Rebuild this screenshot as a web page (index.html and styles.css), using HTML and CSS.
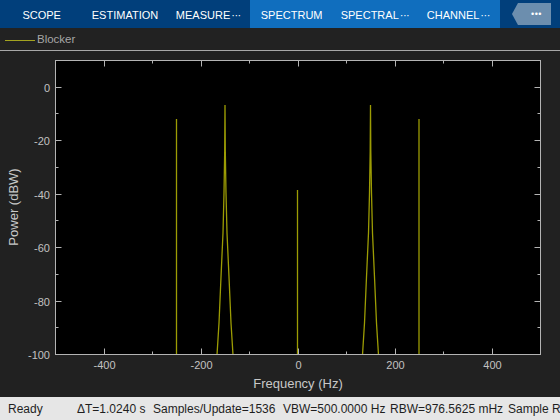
FILE: index.html
```html
<!DOCTYPE html>
<html>
<head>
<meta charset="utf-8">
<link rel="stylesheet" href="styles.css">
</head>
<body>
<div class="app">
  <div class="toolbar">
    <div class="tab-group dark">
      <div class="tab">SCOPE</div>
      <div class="tab">ESTIMATION</div>
      <div class="tab">MEASURE<span class="ell">···</span></div>
    </div>
    <div class="tab-group light">
      <div class="tab">SPECTRUM</div>
      <div class="tab">SPECTRAL<span class="ell">···</span></div>
      <div class="tab">CHANNEL <span class="ell">···</span></div>
    </div>
    <div class="more">
      <div class="more-btn">•••</div>
    </div>
  </div>
  <div class="legend">
    <span class="swatch"></span><span class="legend-label">Blocker</span>
  </div>
  <div class="plot">
    <svg class="chart" width="560" height="346" viewBox="0 0 560 346">
      <defs>
        <clipPath id="axclip"><rect x="55.5" y="9.5" width="485" height="294"/></clipPath>
      </defs>
      <rect x="55.5" y="9.5" width="485" height="294" fill="#000"/>
      <g clip-path="url(#axclip)" fill="none" stroke="#9c9c04" stroke-width="1.3">
        <path d="M176.5,68 V304"/>
        <path d="M419,68 V304"/>
        <path d="M297.5,139 V304"/>
        <path d="M217,304 L219,272 L221,226 L223,182 L224,142 L224.7,100 L225,54 L225.3,100 L226,142 L227,182 L229,226 L231,272 L233,304"/>
        <path d="M362.5,304 L364.5,272 L366.5,226 L368.5,182 L369.5,142 L370.2,100 L370.5,54 L370.8,100 L371.5,142 L372.5,182 L374.5,226 L376.5,272 L378.5,304"/>
      </g>
      <g fill="none" stroke="#b4b4b4" stroke-width="1">
        <rect x="55.5" y="9.5" width="485" height="294"/>
        <path d="M55.5,36.5 h6 M55.5,62.5 h3 M55.5,89.5 h6 M55.5,116.5 h3 M55.5,143.5 h6 M55.5,169.5 h3 M55.5,196.5 h6 M55.5,223.5 h3 M55.5,250.5 h6 M55.5,276.5 h3"/>
        <path d="M540.5,36.5 h-6 M540.5,62.5 h-3 M540.5,89.5 h-6 M540.5,116.5 h-3 M540.5,143.5 h-6 M540.5,169.5 h-3 M540.5,196.5 h-6 M540.5,223.5 h-3 M540.5,250.5 h-6 M540.5,276.5 h-3"/>
        <path d="M104.5,303.5 v-6 M152.5,303.5 v-3 M201.5,303.5 v-6 M249.5,303.5 v-3 M298.5,303.5 v-6 M346.5,303.5 v-3 M395.5,303.5 v-6 M443.5,303.5 v-3 M492.5,303.5 v-6"/>
        <path d="M104.5,9.5 v6 M152.5,9.5 v3 M201.5,9.5 v6 M249.5,9.5 v3 M298.5,9.5 v6 M346.5,9.5 v3 M395.5,9.5 v6 M443.5,9.5 v3 M492.5,9.5 v6"/>
      </g>
      <g class="ticklabels" text-anchor="end">
        <text x="50" y="40.5">0</text>
        <text x="50" y="93.5">-20</text>
        <text x="50" y="147.5">-40</text>
        <text x="50" y="200.5">-60</text>
        <text x="50" y="254.5">-80</text>
        <text x="50" y="307.5">-100</text>
      </g>
      <g class="ticklabels" text-anchor="middle">
        <text x="104.5" y="318">-400</text>
        <text x="201.5" y="318">-200</text>
        <text x="298.5" y="318">0</text>
        <text x="395.5" y="318">200</text>
        <text x="492.5" y="318">400</text>
      </g>
      <text class="axislabel" x="298" y="337" text-anchor="middle">Frequency (Hz)</text>
      <text class="axislabel" x="0" y="0" text-anchor="middle" transform="translate(18,156) rotate(-90)">Power (dBW)</text>
    </svg>
  </div>
  <div class="status">
    <span class="field f-ready">Ready</span>
    <span class="field f-dt">ΔT=1.0240 s</span>
    <span class="field f-spu">Samples/Update=1536</span>
    <span class="field f-vbw">VBW=500.0000 Hz</span>
    <span class="field f-rbw">RBW=976.5625 mHz</span>
    <span class="field f-sr">Sample R</span>
  </div>
</div>
</body>
</html>
```
FILE: styles.css
```css
html, body {
  margin: 0;
  padding: 0;
}
body {
  width: 560px;
  height: 420px;
  overflow: hidden;
  background: #212121;
  font-family: "Liberation Sans", Arial, sans-serif;
}
.app {
  display: flex;
  flex-direction: column;
  width: 560px;
  height: 420px;
}
.toolbar {
  display: flex;
  height: 28px;
  background: #013f7b;
  flex: 0 0 auto;
}
.tab-group {
  display: flex;
}
.tab-group.light {
  background: #106ebe;
}
.tab {
  width: 83.33px;
  display: flex;
  align-items: center;
  justify-content: center;
  color: #ffffff;
  font-size: 11px;
  white-space: nowrap;
  padding-top: 2px;
  box-sizing: border-box;
}
.ell {
  letter-spacing: -0.5px;
  margin-left: 1px;
}
.more {
  flex: 1;
  display: flex;
  align-items: center;
  padding-left: 12px;
}
.more-btn {
  width: 39px;
  height: 22px;
  background: #6c8eae;
  clip-path: polygon(6px 0, 100% 0, 100% 100%, 6px 100%, 0 50%);
  color: #ffffff;
  font-size: 9px;
  letter-spacing: 0.5px;
  display: flex;
  align-items: center;
  justify-content: center;
  padding-left: 10px;
  box-sizing: border-box;
}
.legend {
  height: 22px;
  display: flex;
  align-items: center;
  padding-left: 5px;
  border-bottom: 1px solid #a8a8a8;
  background: #222222;
  flex: 0 0 auto;
}
.swatch {
  width: 30px;
  height: 1px;
  background: #a3a320;
  margin-right: 2px;
  margin-top: 2px;
}
.legend-label {
  color: #a6a6a6;
  font-size: 11.5px;
}
.plot {
  height: 346px;
  flex: 0 0 auto;
}
.chart {
  display: block;
}
.ticklabels text {
  fill: #c2c2c2;
  font-size: 11px;
  font-family: "Liberation Sans", Arial, sans-serif;
}
.axislabel {
  fill: #c8c8c8;
  font-size: 13px;
  font-family: "Liberation Sans", Arial, sans-serif;
}
.status {
  flex: 1;
  display: flex;
  align-items: center;
  background: #e6e6e6;
  color: #1e1e1e;
  font-size: 12px;
  white-space: nowrap;
  overflow: hidden;
  padding-left: 8px;
}
.field {
  flex: 0 0 auto;
}
.f-ready { width: 69px; }
.f-dt { width: 76px; }
.f-spu { width: 130px; }
.f-vbw { width: 107px; }
.f-rbw { width: 118px; }
```
